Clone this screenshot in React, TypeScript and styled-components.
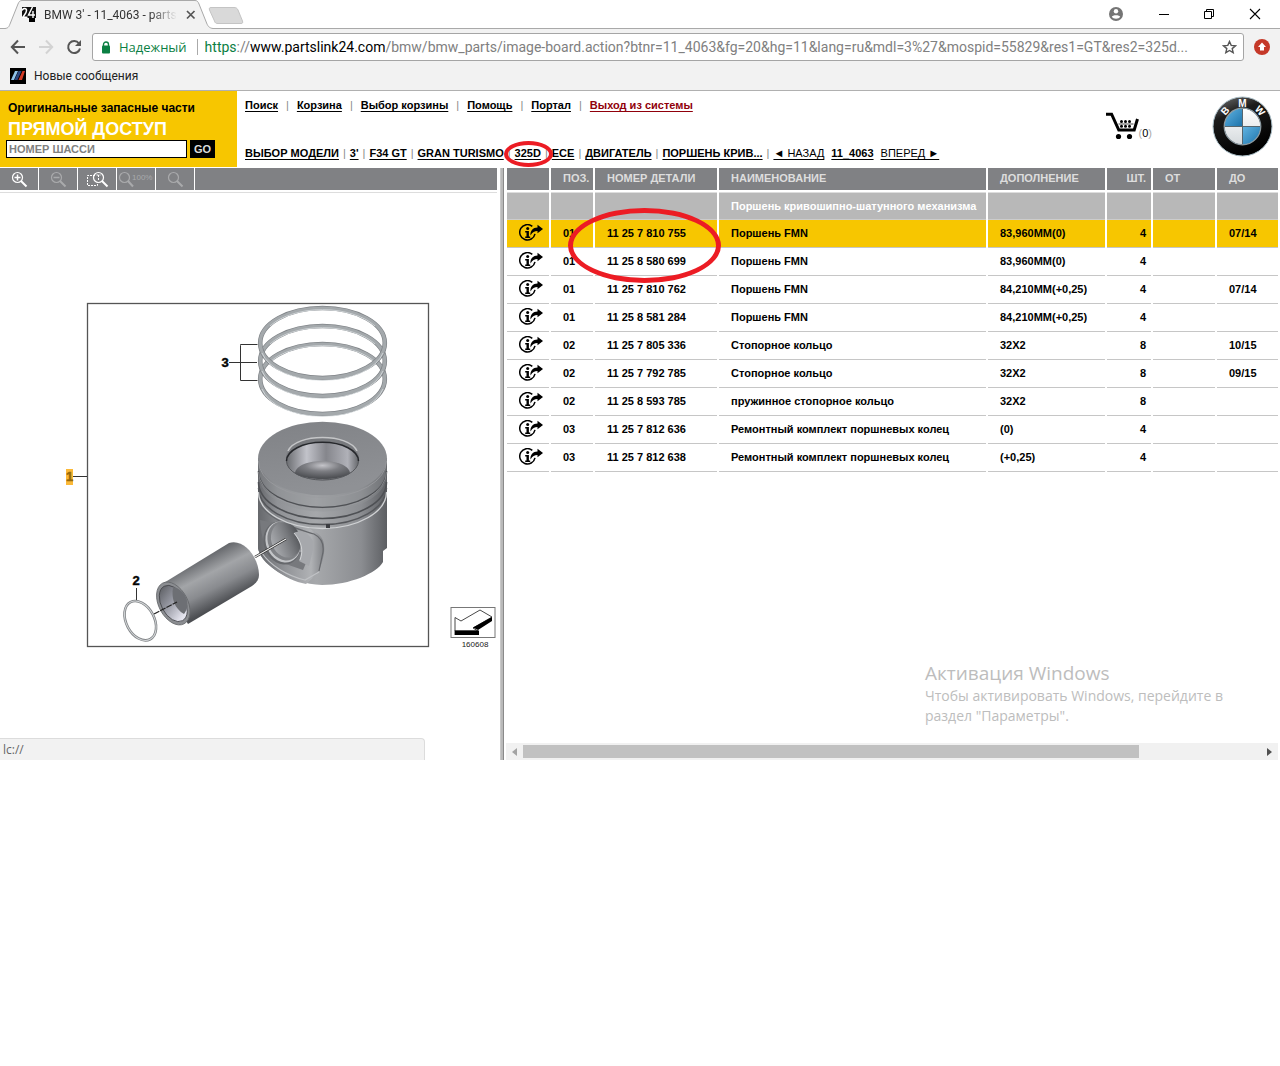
import React from "react";
import styled, { createGlobalStyle } from "styled-components";

const ui = `"Open Sans", "Noto Sans", sans-serif`;
const chrome = `Roboto, "Noto Sans", sans-serif`;
const arial = `"Liberation Sans", Arial, sans-serif`;

const GlobalStyle = createGlobalStyle`
  * { box-sizing: border-box; }
  body { margin: 0; background: #fff; color: #000; font-family: ${arial}; font-size: 11px; }
  button, input { font: inherit; margin: 0; padding: 0; border: 0; }
  button { background: none; color: inherit; }
  svg { display: block; flex: none; }
`;

/* ---------- browser chrome ---------- */

const TabStrip = styled.div`
  display: flex;
  align-items: flex-start;
  height: 29px;
  padding-left: 5px;
  border-bottom: 1px solid #a9a9a9;
  background: #fff;
`;

const Tab = styled.div`
  position: relative;
  display: flex;
  align-items: center;
  gap: 8px;
  width: 208px;
  height: 29px;
  padding: 0 17px;
  font: 12px/16px ${chrome};
`;

const TabShape = styled.svg`
  position: absolute;
  left: 0;
  top: 0;
`;

const TabTitle = styled.span`
  position: relative;
  flex: 1;
  white-space: nowrap;
  color: #333;
  mask-image: linear-gradient(to right, #000 80%, transparent);
`;

const TabIcon = styled.span`
  position: relative;
`;

const TabClose = styled.button`
  position: relative;
  width: 12px;
  height: 12px;
`;

const NewTab = styled.button`
  margin: 6px 0 0 -5px;
`;

const WindowControls = styled.div`
  display: flex;
  align-items: center;
  gap: 30px;
  margin-left: auto;
  height: 27px;
  padding-right: 19px;
`;

const Toolbar = styled.div`
  display: flex;
  align-items: center;
  gap: 10px;
  height: 36px;
  padding: 0 10px;
  background: #f2f2f2;
`;

const NavButtons = styled.div`
  display: flex;
  gap: 12px;
`;

const AddressBar = styled.div`
  display: flex;
  align-items: center;
  flex: 1;
  min-width: 0;
  height: 28px;
  padding: 0 6px 0 8px;
  border: 1px solid #a5a5a5;
  border-radius: 3px;
  background: #fff;
`;

const Secure = styled.span`
  margin-left: 8px;
  padding-right: 10px;
  border-right: 1px solid #aaa;
  font: 13px/16px ${ui};
  color: #0b8043;
`;

const Url = styled.span`
  flex: 1;
  min-width: 0;
  margin: 0 18px 0 7px;
  overflow: hidden;
  font: 14px/20px ${chrome};
  white-space: nowrap;
  color: #808080;
`;

const Scheme = styled.span`
  color: #0b8043;
`;

const Host = styled.span`
  color: #000;
`;

const Bookmarks = styled.div`
  display: flex;
  align-items: center;
  height: 26px;
  padding: 0 10px 4px;
  border-bottom: 1px solid #b0b0b0;
  background: #f2f2f2;
`;

const Bookmark = styled.a`
  display: flex;
  align-items: center;
  gap: 8px;
  font: 12px/16px ${chrome};
  color: #222;
  text-decoration: none;
`;

/* ---------- page header ---------- */

const Header = styled.header`
  display: flex;
  height: 77px;
  padding-bottom: 1px;
`;

const DirectAccess = styled.form`
  flex: 0 0 237px;
  padding: 9px 6px 0;
  background: #f7c600;
`;

const AccessTitle = styled.div`
  padding-left: 2px;
  font: bold 12px/16px ${arial};
`;

const AccessHeading = styled.div`
  padding: 2px 0 0 2px;
  font: bold 18px/22px ${arial};
  color: #fff;
`;

const AccessRow = styled.div`
  display: flex;
  gap: 3px;
`;

const ChassisInput = styled.input`
  width: 181px;
  height: 18px;
  padding-left: 2px;
  border: 1px solid #000;
  background: #fff;
  font: bold 11px/16px ${arial};
  &::placeholder { color: #808080; opacity: 1; }
`;

const GoButton = styled.button`
  width: 25px;
  height: 18px;
  background: #000;
  color: #ddd;
  font: bold 11px/18px ${arial};
`;

const NavArea = styled.div`
  display: flex;
  flex-direction: column;
  justify-content: space-between;
  flex: 1;
  padding: 7px 0 7px 8px;
`;

const LinkRow = styled.nav<{ $gap: number }>`
  display: flex;
  gap: ${(p) => p.$gap}px;
  line-height: 14px;
  color: #888;
  white-space: nowrap;
`;

const NavLink = styled.a<{ $color?: string; $light?: boolean }>`
  color: ${(p) => p.$color ?? "#000"};
  font-weight: ${(p) => (p.$light ? "normal" : "bold")};
  text-decoration: underline;
  text-underline-offset: 2px;
`;

const Pager = styled.span`
  display: flex;
  gap: 7px;
`;

const Marked = styled.span`
  position: relative;
`;

const RedOval = styled.span<{ $x: number; $y: number; $w: number; $h: number; $line: number }>`
  position: absolute;
  left: ${(p) => p.$x}px;
  top: ${(p) => p.$y}px;
  width: ${(p) => p.$w}px;
  height: ${(p) => p.$h}px;
  border: ${(p) => p.$line}px solid #ec1c24;
  border-radius: 50%;
  z-index: 2;
  pointer-events: none;
`;

const Cart = styled.a`
  display: flex;
  align-items: flex-end;
  align-self: flex-start;
  margin: 21px 60px 0 0;
  line-height: 14px;
  color: #aaa;
  text-decoration: none;
  b { color: #000; font-weight: normal; }
`;

const Logo = styled.a`
  margin: 5px 7px 0 0;
`;

/* ---------- workspace ---------- */

const Workspace = styled.main`
  position: relative;
  display: flex;
  height: 592px;
`;

const ImagePane = styled.section`
  display: flex;
  flex-direction: column;
  flex: 0 0 500px;
  padding-right: 3px;
`;

const ImageToolbar = styled.div`
  display: flex;
  height: 22px;
  background: #808184;
`;

const ToolButton = styled.button<{ $dim?: boolean }>`
  width: 39px;
  height: 22px;
  border-right: 1px solid #fff;
  color: ${(p) => (p.$dim ? "#a9aaac" : "#fff")};
`;

const Rule = styled.div`
  height: 1px;
  margin-top: 2px;
  background: #ddd;
`;

const Drawing = styled.svg`
  margin: 103px 0 0 60px;
`;

const Splitter = styled.div`
  flex: 0 0 4px;
  border-left: 1px solid #c8c8c8;
  border-right: 1px solid #8a8a8a;
  background: #b9b9b9;
`;

const PartsPane = styled.section`
  position: relative;
  display: flex;
  flex-direction: column;
  justify-content: space-between;
  flex: 1;
  min-width: 0;
  padding-left: 1px;
`;

const Parts = styled.table`
  width: 100%;
  table-layout: fixed;
  border-collapse: separate;
  border-spacing: 2px 0;
  font: bold 11px/14px ${arial};
`;

const Head = styled.th<{ $end?: boolean }>`
  height: 24px;
  padding: 0 ${(p) => (p.$end ? 5 : 0)}px 2px ${(p) => (p.$end ? 0 : 12)}px;
  border-bottom: 2px solid #fff;
  background: #808184;
  color: #ddd;
  text-align: ${(p) => (p.$end ? "right" : "left")};
  white-space: nowrap;
`;

const GroupCell = styled.td`
  height: 28px;
  padding: 0 0 0 12px;
  border-top: 1px solid #ddd;
  border-bottom: 1px solid #ccc;
  background: #b8b8b8;
  color: #fff;
  white-space: nowrap;
`;

const Cell = styled.td<{ $end?: boolean; $on?: boolean }>`
  height: 28px;
  padding: 0 ${(p) => (p.$end ? 5 : 0)}px 1px ${(p) => (p.$end ? 0 : 12)}px;
  border-bottom: 1px solid #c6c6c6;
  background: ${(p) => (p.$on ? "#f7c600" : "#fff")};
  text-align: ${(p) => (p.$end ? "right" : "left")};
  white-space: nowrap;
`;

const ScrollBar = styled.div`
  display: flex;
  align-items: center;
  height: 17px;
  margin: 0 2px 0 1px;
  background: #f1f1f1;
`;

const ScrollButton = styled.button`
  display: flex;
  align-items: center;
  justify-content: center;
  width: 17px;
  height: 17px;
`;

const Track = styled.div`
  flex: 1;
`;

const Thumb = styled.div`
  width: 83.5%;
  height: 13px;
  background: #c1c1c1;
`;

const Watermark = styled.aside`
  position: absolute;
  right: 53px;
  bottom: 34px;
  width: 302px;
  font: 14px/20px ${ui};
  color: #bdbdbd;
  white-space: nowrap;
`;

const WatermarkTitle = styled.div`
  font-size: 19px;
  line-height: 26px;
`;

const StatusBubble = styled.div`
  position: absolute;
  left: 0;
  bottom: 0;
  width: 425px;
  height: 22px;
  padding-left: 3px;
  border: solid #dcdcdc;
  border-width: 1px 1px 0 0;
  border-top-right-radius: 4px;
  background: #f2f2f2;
  font: 12px/21px ${ui};
  color: #666;
`;

/* ---------- icons ---------- */

const Favicon = () => (
  <svg width="14" height="15" viewBox="0 0 14 15">
    <path d="M0 0h14v11H0z" fill="#111" />
    <path d="M7 11h6v4H7z" fill="#000" />
    <path d="M0 3.500C1 .8 4.500 .8 4.500 3.600 4.500 6 2.500 7.500 .8 10.200H5.500" fill="none" stroke="#fff" strokeWidth="1.500" />
    <path d="M10.500 0L6.500 8H13M11 4v7" fill="none" stroke="#fff" strokeWidth="1.400" />
  </svg>
);

const PersonIcon = () => (
  <svg width="14" height="14" viewBox="0 0 14 14">
    <circle cx="7" cy="7" r="7" fill="#757575" />
    <circle cx="7" cy="4.200" r="2.200" fill="#fff" />
    <path d="M2.800 9.800C3.200 7.600 10.800 7.600 11.200 9.800 10 12.300 4 12.300 2.800 9.800z" fill="#fff" />
  </svg>
);

const Magnifier = ({ children }: { children?: React.ReactNode }) => (
  <svg width="38" height="22" viewBox="0 0 38 22" fill="none" stroke="currentColor">
    <circle cx="17.500" cy="9.500" r="5" strokeWidth="1.200" />
    <path d="M21 13l5.500 5.500" strokeWidth="2" />
    {children}
  </svg>
);

const InfoIcon = () => (
  <svg width="24" height="18" viewBox="0 0 24 18">
    <path d="M13.300 2.300A7.700 7.700 0 1 0 16 9.800" fill="none" stroke="#000" strokeWidth="1.500" />
    <circle cx="8.700" cy="4.500" r="1.500" />
    <path d="M6.200 7h3.700v5.500h1.300V14H6.200v-1.500h1.300V8.500H6.200z" />
    <path d="M11.500 11.500C11 7 14 3.500 18.500 3.500V.8L24 5l-5.500 4.300V7C15.500 7 13.500 8 11.500 11.500z" />
  </svg>
);

const CartIcon = () => (
  <svg width="33" height="28" viewBox="0 0 33 28">
    <path d="M0 2.200h5.600L12.800 18h15.400L31.500 7" fill="none" stroke="#000" strokeWidth="3" />
    <circle cx="12.500" cy="24.500" r="2.600" />
    <circle cx="23.500" cy="24.500" r="2.600" />
    {[15.5, 19.500, 23.500].map((x) => (
      <g key={x}>
        <circle cx={x} cy="9.500" r="1.500" />
        <circle cx={x} cy="14.300" r="1.500" />
      </g>
    ))}
    <path d="M12.500 12h15" stroke="#000" strokeWidth=".7" />
  </svg>
);

const BmwLogo = () => (
  <svg width="61" height="61" viewBox="0 0 61 61">
    <defs>
      <linearGradient id="rim" x1="0" y1="0" x2="0.400" y2="1">
        <stop offset="0" stopColor="#777" />
        <stop offset=".35" stopColor="#1c1c1c" />
        <stop offset="1" stopColor="#000" />
      </linearGradient>
      <linearGradient id="blue" x1="0" y1="0" x2="1" y2="1">
        <stop offset="0" stopColor="#62b4e2" />
        <stop offset="1" stopColor="#1b72aa" />
      </linearGradient>
      <linearGradient id="pearl" x1="0" y1="0" x2="0" y2="1">
        <stop offset="0" stopColor="#fff" />
        <stop offset="1" stopColor="#d5dadd" />
      </linearGradient>
    </defs>
    <circle cx="30.500" cy="30.500" r="29.500" fill="url(#rim)" stroke="#a9bdc6" />
    <circle cx="30.500" cy="30.500" r="18" fill="url(#pearl)" />
    <path d="M30.500 30.500V12.500A18 18 0 0 0 12.500 30.500z" fill="url(#blue)" />
    <path d="M30.500 30.500V48.500A18 18 0 0 0 48.500 30.500z" fill="url(#blue)" />
    <path d="M30.500 12.500v36M12.500 30.500h36" stroke="#56666e" />
    <circle cx="30.500" cy="30.500" r="18.300" fill="none" stroke="#8c9aa1" strokeWidth="1.200" />
    <g fill="#fff" fontFamily={arial} fontWeight="bold" fontSize="10" textAnchor="middle">
      <text x="30.500" y="10.500">M</text>
      <text x="30.500" y="10.500" transform="rotate(-48 30.500 30.500)">B</text>
      <text x="30.500" y="10.500" transform="rotate(48 30.500 30.500)">W</text>
    </g>
  </svg>
);

const groove = (y: number) => `M258.500 ${y}A64 36.500 0 0 0 386.500 ${y}`;

const PistonDrawing = () => (
  <Drawing width="436" height="356" viewBox="60 296 436 356">
    <defs>
      <linearGradient id="body">
        <stop offset="0" stopColor="#66686c" />
        <stop offset=".15" stopColor="#909296" />
        <stop offset=".45" stopColor="#a6a8ab" />
        <stop offset=".8" stopColor="#8b8d91" />
        <stop offset="1" stopColor="#5c5e62" />
      </linearGradient>
      <linearGradient id="crown" x1="0" y1="0" x2=".3" y2="1">
        <stop offset="0" stopColor="#808286" />
        <stop offset="1" stopColor="#8f9195" />
      </linearGradient>
      <linearGradient id="bowl">
        <stop offset="0" stopColor="#6b6d71" />
        <stop offset=".28" stopColor="#c2c3ca" />
        <stop offset=".55" stopColor="#85868c" />
        <stop offset=".85" stopColor="#b0b1b8" />
        <stop offset="1" stopColor="#66686c" />
      </linearGradient>
      <radialGradient id="cone" cx=".5" cy=".25" r=".7">
        <stop offset="0" stopColor="#c4c4c9" />
        <stop offset=".45" stopColor="#7d7e83" />
        <stop offset="1" stopColor="#4e5054" />
      </radialGradient>
      <linearGradient id="pin" gradientUnits="userSpaceOnUse" x1="197" y1="560" x2="220" y2="605">
        <stop offset="0" stopColor="#66686c" />
        <stop offset=".35" stopColor="#a3a5a8" />
        <stop offset=".65" stopColor="#898b8f" />
        <stop offset="1" stopColor="#4c4e52" />
      </linearGradient>
      <linearGradient id="bore" x1="0" y1="0" x2=".3" y2="1">
        <stop offset="0" stopColor="#55575b" />
        <stop offset=".5" stopColor="#9496a0" />
        <stop offset="1" stopColor="#e4e4ee" />
      </linearGradient>
      <linearGradient id="pocket">
        <stop offset="0" stopColor="#66686c" />
        <stop offset=".4" stopColor="#909296" />
        <stop offset=".8" stopColor="#b0b2b5" />
        <stop offset="1" stopColor="#808286" />
      </linearGradient>
      <linearGradient id="hole">
        <stop offset="0" stopColor="#a8aaae" />
        <stop offset=".6" stopColor="#77797d" />
        <stop offset="1" stopColor="#505256" />
      </linearGradient>
    </defs>

    <rect x="87.500" y="303.500" width="341" height="343" fill="none" stroke="#555" strokeWidth="1.300" />

    {[379, 361, 343].map((cy) => (
      <g key={cy} fill="none">
        <ellipse cx="322.500" cy={cy} rx="62.300" ry="35" stroke="#7f8387" strokeWidth="4.600" />
        <ellipse cx="322.500" cy={cy} rx="62.300" ry="35" stroke="#a4a9ac" strokeWidth="3.200" />
        <path d={`M262 ${cy + 10}A62 35 0 0 0 383 ${cy + 10}`} stroke="#dce1e3" strokeWidth=".8" />
        <path d={`M270 ${cy - 17}A62 35 0 0 1 375 ${cy - 17}`} stroke="#dce1e3" strokeWidth=".8" />
      </g>
    ))}

    <path d="M240.500 345.500v-1h17M240.500 345.500v35h17M229 362.500h28M73 476.500h14M136.500 588v12" fill="none" stroke="#333" />

    <path d="M258 458V548C260 559 270 567 280 573 292 580 305 584 322 585 350 585 377 573 383 562V551L387 548V458z" fill="url(#body)" />
    <path d={`${groove(458)}V475A64 36.500 0 0 1 258.500 475z`} fill="#929498" fillOpacity=".35" />
    <path d="M258 500C268 513 305 524 315 532 323 536 325 543 324 553 321 570 318 574 306 584 285 580 260 562 258 548z" fill="url(#pocket)" />
    <path d="M261 507C280 526 302 530 314 534 322 538 324 544 323 552L319 571" fill="none" stroke="#66686c" strokeWidth="1.200" />
    <path d="M260 520C262 545 268 556 280 562L303 570 309 556C299 556 292 540 285 525z" fill="#77797d" />
    <ellipse cx="282" cy="543" rx="18" ry="22" transform="rotate(-22 282 543)" fill="#66686c" />
    <ellipse cx="283" cy="542" rx="17" ry="21" transform="rotate(-22 283 542)" fill="#c3c5c8" />
    <ellipse cx="284" cy="541" rx="16" ry="20" transform="rotate(-22 284 541)" fill="#808286" />
    <ellipse cx="286" cy="540" rx="14.500" ry="18" transform="rotate(-22 286 540)" fill="url(#hole)" />
    <path d="M294 533C300 529 309 533 313 541V550L309 566 299 561C304 550 300 542 294 533z" fill="#a6a8ac" />
    <path d="M294 533C301 541 304 550 300 560" fill="none" stroke="#d3d5d7" />
    <path d="M262 553C270 565 287 576 305 580L319 572" fill="none" stroke="#c0c2c5" strokeWidth="1.200" />

    <path d={groove(471)} fill="none" stroke="#4e5054" strokeWidth="1.600" />
    <path d={groove(472)} fill="none" stroke="#a7a9ac" strokeWidth=".6" />
    <path d={groove(482)} fill="none" stroke="#4e5054" strokeWidth="1.600" />
    <path d={groove(488)} fill="none" stroke="#55575b" strokeWidth="1.500" />
    <path d={groove(492)} fill="none" stroke="#d0d2d4" strokeWidth="1.300" />
    <path d="M326 524h4v4h-4z" fill="#3a3c40" />

    <ellipse cx="322.500" cy="458.500" rx="64.500" ry="36.700" fill="url(#crown)" />
    <path d="M258.500 461A64 36.500 0 0 0 386.500 461" fill="none" stroke="#9a9ca0" strokeWidth=".8" />
    <ellipse cx="322.500" cy="459" rx="36.700" ry="21.500" fill="#77797d" />
    <path d="M288 451C296 433 349 433 357 451" fill="none" stroke="#c5c6c8" strokeWidth="1.500" />
    <ellipse cx="322.500" cy="461" rx="36" ry="18.700" fill="url(#bowl)" />
    <path d="M286.500 461A36 18.700 0 0 1 358.500 461" fill="none" stroke="#26282c" strokeWidth="1.500" />
    <path d="M295 473C297 457 348 457 350 473 342 481 303 481 295 473z" fill="url(#cone)" />
    <path d="M286.500 461A36 19 0 0 0 358.500 461" fill="none" stroke="#55575b" />

    <path d="M255 557l31-18" stroke="#222" strokeWidth="2.600" />
    <path d="M255 557l31-18" stroke="#eee" strokeWidth="1.200" />

    <path d="M162 584L229 543C244 538 259 558 259 575 259 580 256 583 252 586L188 624z" fill="url(#pin)" />
    <ellipse cx="173.300" cy="603.500" rx="14.500" ry="23" transform="rotate(-28 173.300 603.500)" fill="#8b8d91" stroke="#66686c" strokeWidth=".8" />
    <ellipse cx="173.300" cy="603.500" rx="12" ry="19.500" transform="rotate(-28 173.300 603.500)" fill="url(#bore)" stroke="#44464a" strokeWidth=".8" />
    <path d="M173 587C185 589 192 604 184 614 175 609 171 599 173 587z" fill="#6d6f74" />
    <path d="M154 614l23-12" stroke="#222" strokeWidth="1.300" strokeDasharray="6 1" />

    <ellipse cx="140.300" cy="620.700" rx="14" ry="21" transform="rotate(-28 140.300 620.700)" fill="none" stroke="#7f8285" strokeWidth="2.600" />
    <ellipse cx="140.300" cy="620.700" rx="14" ry="21" transform="rotate(-28 140.300 620.700)" fill="none" stroke="#d3d6d8" strokeWidth="1" />

    <rect x="66" y="469" width="7" height="16" fill="#fbb938" />
    <g fontFamily={arial} fontWeight="bold" fontSize="13" textAnchor="middle" stroke="#111" strokeWidth=".5">
      <text x="225" y="367">3</text>
      <text x="136" y="585">2</text>
      <text x="69.500" y="481" fill="#97690a" stroke="#97690a">1</text>
    </g>

    <rect x="451" y="607.500" width="44" height="30" fill="#fff" stroke="#777" />
    <path d="M455 631V617.500L461 621 480 610 492 617 473 628 478 631z" fill="#fff" stroke="#333" strokeWidth=".9" />
    <path d="M492 617v4l-14 9-5-2.500zM454.600 630.600H479v4.400h-24.400z" fill="#000" />
    <text x="475" y="647" fontFamily={arial} fontSize="8" textAnchor="middle" fill="#222">160608</text>
  </Drawing>
);

/* ---------- data ---------- */

const topLinks = ["Поиск", "Корзина", "Выбор корзины", "Помощь", "Портал"];
const crumbs = ["ВЫБОР МОДЕЛИ", "3'", "F34 GT", "GRAN TURISMO", "325D", "ECE", "ДВИГАТЕЛЬ", "ПОРШЕНЬ КРИВ..."];
const columns = ["", "ПОЗ.", "НОМЕР ДЕТАЛИ", "НАИМЕНОВАНИЕ", "ДОПОЛНЕНИЕ", "ШТ.", "ОТ", "ДО"];
const widths = [42, 42, 122, 0, 117, 44, 62, 61];

const parts = [
  ["01", "11 25 7 810 755", "Поршень FMN", "83,960MM(0)", "4", "", "07/14"],
  ["01", "11 25 8 580 699", "Поршень FMN", "83,960MM(0)", "4", "", ""],
  ["01", "11 25 7 810 762", "Поршень FMN", "84,210MM(+0,25)", "4", "", "07/14"],
  ["01", "11 25 8 581 284", "Поршень FMN", "84,210MM(+0,25)", "4", "", ""],
  ["02", "11 25 7 805 336", "Стопорное кольцо", "32X2", "8", "", "10/15"],
  ["02", "11 25 7 792 785", "Стопорное кольцо", "32X2", "8", "", "09/15"],
  ["02", "11 25 8 593 785", "пружинное стопорное кольцо", "32X2", "8", "", ""],
  ["03", "11 25 7 812 636", "Ремонтный комплект поршневых колец", "(0)", "4", "", ""],
  ["03", "11 25 7 812 638", "Ремонтный комплект поршневых колец", "(+0,25)", "4", "", ""],
];

export default function App() {
  return (
    <>
      <GlobalStyle />
      <TabStrip>
        <Tab>
          <TabShape width="208" height="29" viewBox="0 0 208 29">
            <path d="M0 28.500C4 28 4 26 5 24L13 4C14 1.500 15 .5 17 .5H190C192 .5 193 1.500 194 4L202 24C203 26 204 28 208 28.500V29H0z" fill="#f2f2f2" />
            <path d="M0 28.500C4 28 4 26 5 24L13 4C14 1.500 15 .5 17 .5H190C192 .5 193 1.500 194 4L202 24C203 26 204 28 208 28.500" fill="none" stroke="#a9a9a9" />
          </TabShape>
          <TabIcon><Favicon /></TabIcon>
          <TabTitle>BMW 3' - 11_4063 - parts</TabTitle>
          <TabClose aria-label="Закрыть вкладку">
            <svg width="12" height="12" viewBox="0 0 12 12"><path d="M2 2l7.500 7.500M9.500 2L2 9.500" stroke="#555" strokeWidth="1.700" /></svg>
          </TabClose>
        </Tab>
        <NewTab aria-label="Новая вкладка">
          <svg width="36" height="19" viewBox="0 0 36 19"><path d="M3 1.500H26C28 1.500 29 2 30 4L34.500 15C35 17 34.500 17.500 33 17.500H10C8 17.500 7 17 6.500 15L1.500 4C1 2 1.500 1.500 3 1.500z" fill="#d9d9d9" stroke="#c4c4c4" /></svg>
        </NewTab>
        <WindowControls>
          <button aria-label="Профиль"><PersonIcon /></button>
          <button aria-label="Свернуть"><svg width="16" height="12" viewBox="0 0 16 12"><path d="M6 6.500h10" stroke="#000" /></svg></button>
          <button aria-label="Развернуть"><svg width="16" height="12" viewBox="0 0 16 12" fill="none" stroke="#000"><path d="M5.500 3.500h7v7h-7zM7.500 3.500v-2h7v7h-2" /></svg></button>
          <button aria-label="Закрыть"><svg width="16" height="12" viewBox="0 0 16 12"><path d="M5 1l10 10M15 1L5 11" stroke="#000" strokeWidth="1.100" /></svg></button>
        </WindowControls>
      </TabStrip>

      <Toolbar>
        <NavButtons>
          <button aria-label="Назад"><svg width="16" height="16" viewBox="0 0 16 16" fill="none" stroke="#555" strokeWidth="2"><path d="M15 8H2.500M8 1.500L1.800 8 8 14.500" /></svg></button>
          <button aria-label="Вперед"><svg width="16" height="16" viewBox="0 0 16 16" fill="none" stroke="#d3d3d3" strokeWidth="2"><path d="M1 8h12.500M8 1.500L14.200 8 8 14.500" /></svg></button>
          <button aria-label="Обновить"><svg width="16" height="16" viewBox="0 0 16 16"><path d="M13 4.500A6 6 0 1 0 14 9.500" fill="none" stroke="#555" strokeWidth="2" /><path d="M15 1v6H9z" fill="#555" /></svg></button>
        </NavButtons>
        <AddressBar>
          <svg width="10" height="13" viewBox="0 0 10 13"><path d="M2.500 6V3.500a2.500 2.500 0 0 1 5 0V6" fill="none" stroke="#0b8043" strokeWidth="1.400" /><rect x="1" y="4.500" width="8" height="8" rx="1" fill="#0b8043" /></svg>
          <Secure>Надежный</Secure>
          <Url>
            <Scheme>https</Scheme>://<Host>www.partslink24.com</Host>/bmw/bmw_parts/image-board.action?btnr=11_4063&amp;fg=20&amp;hg=11&amp;lang=ru&amp;mdl=3%27&amp;mospid=55829&amp;res1=GT&amp;res2=325d...
          </Url>
          <button aria-label="Добавить в закладки"><svg width="15" height="14" viewBox="0 0 15 14"><path d="M7.500 1.500L9.200 5.400l4.300.4-3.300 2.800 1 4.100-3.700-2.200-3.700 2.200 1-4.100L1.500 5.800l4.300-.4z" fill="none" stroke="#555" strokeWidth="1.400" /></svg></button>
        </AddressBar>
        <button aria-label="Обновление"><svg width="16" height="16" viewBox="0 0 16 16"><circle cx="8" cy="8" r="8" fill="#c53929" /><path d="M8 3.500L12 8H10v3.500H6V8H4z" fill="#fff" /></svg></button>
      </Toolbar>

      <Bookmarks>
        <Bookmark href="#messages">
          <svg width="16" height="16" viewBox="0 0 16 16"><path d="M0 0h16v16H0z" /><path d="M1 12L5 3h3L4 12z" fill="#8fc3ea" /><path d="M4.500 12l4-9h3l-4 9z" fill="#2a4580" /><path d="M8.500 12l4-9H15l-3 9z" fill="#d33a25" /></svg>
          Новые сообщения
        </Bookmark>
      </Bookmarks>

      <Header>
        <DirectAccess onSubmit={(e) => e.preventDefault()}>
          <AccessTitle>Оригинальные запасные части</AccessTitle>
          <AccessHeading>ПРЯМОЙ ДОСТУП</AccessHeading>
          <AccessRow>
            <ChassisInput aria-label="Номер шасси" placeholder="НОМЕР ШАССИ" />
            <GoButton>GO</GoButton>
          </AccessRow>
        </DirectAccess>
        <NavArea>
          <LinkRow $gap={8}>
            {topLinks.map((t) => (
              <React.Fragment key={t}>
                <NavLink href="#">{t}</NavLink>
                <span>|</span>
              </React.Fragment>
            ))}
            <NavLink href="#" $color="#90000b">Выход из системы</NavLink>
          </LinkRow>
          <LinkRow $gap={4}>
            {crumbs.map((t) => (
              <React.Fragment key={t}>
                <Marked>
                  <NavLink href="#">{t}</NavLink>
                  {t === "325D" && <RedOval $x={-11} $y={-5} $w={49} $h={26} $line={4} />}
                </Marked>
                <span>|</span>
              </React.Fragment>
            ))}
            <Pager>
              <NavLink href="#" $light>◄ НАЗАД</NavLink>
              <NavLink href="#">11_4063</NavLink>
              <NavLink href="#" $light>ВПЕРЕД ►</NavLink>
            </Pager>
          </LinkRow>
        </NavArea>
        <Cart href="#" aria-label="Корзина">
          <CartIcon />
          <span>(<b>0</b>)</span>
        </Cart>
        <Logo href="#" aria-label="BMW"><BmwLogo /></Logo>
      </Header>

      <Workspace>
        <ImagePane>
          <ImageToolbar>
            <ToolButton aria-label="Увеличить"><Magnifier><path d="M14.500 9.500h6M17.500 6.500v6" strokeWidth="1.500" /></Magnifier></ToolButton>
            <ToolButton aria-label="Уменьшить" $dim><Magnifier><path d="M14.500 9.500h6" strokeWidth="1.500" /></Magnifier></ToolButton>
            <ToolButton aria-label="Увеличить область">
              <svg width="38" height="22" viewBox="0 0 38 22" fill="none" stroke="currentColor">
                <path d="M17 7.500h-7.500v10h10v-3" strokeDasharray="2 1" />
                <circle cx="20.500" cy="9.500" r="5" strokeWidth="1.200" />
                <path d="M24 13l5.500 5.500" strokeWidth="2" />
                <path d="M18.500 7h4M20.500 7v5" strokeDasharray="2 1" />
              </svg>
            </ToolButton>
            <ToolButton aria-label="100%" $dim>
              <svg width="38" height="22" viewBox="0 0 38 22" fill="none" stroke="currentColor">
                <circle cx="7.500" cy="9.500" r="5" strokeWidth="1.200" />
                <path d="M11 13l5 5.500" strokeWidth="2" />
                <text x="15" y="12" fontFamily={arial} fontSize="8" fill="currentColor" stroke="none">100%</text>
              </svg>
            </ToolButton>
            <ToolButton aria-label="Исходный размер" $dim><Magnifier /></ToolButton>
          </ImageToolbar>
          <Rule />
          <PistonDrawing />
        </ImagePane>
        <Splitter />
        <PartsPane>
          <Parts>
            <colgroup>
              {widths.map((w, i) => (
                <col key={i} width={w || undefined} />
              ))}
            </colgroup>
            <thead>
              <tr>
                {columns.map((c, i) => (
                  <Head key={i} $end={i === 5}>{c}</Head>
                ))}
              </tr>
            </thead>
            <tbody>
              <tr>
                {columns.map((_, i) => (
                  <GroupCell key={i}>{i === 3 ? "Поршень кривошипно-шатунного механизма" : ""}</GroupCell>
                ))}
              </tr>
              {parts.map((row, r) => (
                <tr key={row[1]}>
                  <Cell $on={r === 0}><InfoIcon /></Cell>
                  {row.map((value, i) => (
                    <Cell key={i} $on={r === 0} $end={i === 4}>{value}</Cell>
                  ))}
                </tr>
              ))}
            </tbody>
          </Parts>
          <RedOval $x={64} $y={40} $w={153} $h={75} $line={5} />
          <ScrollBar>
            <ScrollButton aria-label="Влево"><svg width="5" height="8" viewBox="0 0 5 8"><path d="M5 0v8L0 4z" fill="#a3a3a3" /></svg></ScrollButton>
            <Track><Thumb /></Track>
            <ScrollButton aria-label="Вправо"><svg width="5" height="8" viewBox="0 0 5 8"><path d="M0 0v8l5-4z" fill="#505050" /></svg></ScrollButton>
          </ScrollBar>
          <Watermark>
            <WatermarkTitle>Активация Windows</WatermarkTitle>
            Чтобы активировать Windows, перейдите в<br />
            раздел "Параметры".
          </Watermark>
        </PartsPane>
        <StatusBubble>lc://</StatusBubble>
      </Workspace>
    </>
  );
}
